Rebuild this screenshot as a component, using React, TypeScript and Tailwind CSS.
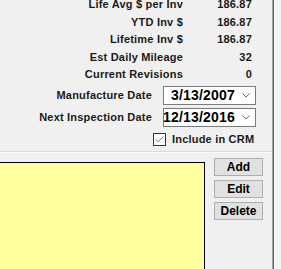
import { Check } from "lucide-react";

const stats = [
  { label: "Life Avg $ per Inv", value: "186.87" },
  { label: "YTD Inv $", value: "186.87" },
  { label: "Lifetime Inv $", value: "186.87" },
  { label: "Est Daily Mileage", value: "32" },
  { label: "Current Revisions", value: "0" },
];

const dates = [
  { label: "Manufacture Date", value: "3/13/2007" },
  { label: "Next Inspection Date", value: "12/13/2016" },
];

function Chevron() {
  return (
    <svg width="8" height="5" viewBox="0 0 8 5" className="shrink-0">
      <path d="M0.5 0.5 L4 4 L7.5 0.5" fill="none" stroke="#6a6a6a" strokeWidth="1" />
    </svg>
  );
}

export default function App() {
  return (
    <div className="w-[281px] h-[269px] overflow-hidden bg-[#f0f0f0] font-['Liberation_Sans',Arial,sans-serif] text-[11px] font-bold tracking-[0.2px] text-[#1a1a1a] flex">
      <div className="w-[272px] flex flex-col">
        {/* ── Stats ─────────────────────────────── */}
        <div className="-mt-[4px] flex flex-col">
          {stats.map((s) => (
            <div key={s.label} className="flex h-[17.4px] items-center">
              <span className="w-[183px] text-right">{s.label}</span>
              <span className="w-[69px] text-right">{s.value}</span>
            </div>
          ))}
        </div>

        {/* ── Dates ─────────────────────────────── */}
        {dates.map((d) => (
          <div key={d.label} className="flex items-center mt-[3px] h-[19px]">
            <span className="w-[152px] text-right">{d.label}</span>
            <div className="ml-[11px] w-[93px] h-[19px] bg-white border border-[#7a7a7a] flex items-center justify-end pr-[5px] gap-[7px]">
              <span className="text-[14px] leading-none tracking-[0.2px] text-black">{d.value}</span>
              <Chevron />
            </div>
          </div>
        ))}

        <div className="flex items-center mt-[6px] h-[13px] pl-[153px] gap-[6px]">
          <div className="w-[13px] h-[13px] bg-white border border-[#333] flex items-center justify-center">
            <Check size={11} strokeWidth={1.5} color="#333" />
          </div>
          <span>Include in CRM</span>
        </div>

        {/* ── Separator ─────────────────────────── */}
        <div className="mt-[5px] h-px bg-[#dadada]" />
        <div className="h-px bg-[#fafafa]" />

        {/* ── Notes + buttons ───────────────────── */}
        <div className="flex flex-1">
          <div className="w-[205px] mt-[9px] bg-[#ffffa0] border-t border-r border-black" />
          <div className="ml-[9px] mt-[5px] w-[49px] flex flex-col gap-[4px]">
            {["Add", "Edit", "Delete"].map((b) => (
              <button
                key={b}
                className="h-[18px] bg-[#e1e1e1] border border-[#adadad] text-[12px] font-bold tracking-normal text-black leading-none"
              >
                {b}
              </button>
            ))}
          </div>
        </div>
      </div>
      <div className="w-px bg-[#a0a0a0]" />
      <div className="w-px bg-[#696969]" />
      <div className="flex-1 bg-[#f4f4f4]" />
    </div>
  );
}
